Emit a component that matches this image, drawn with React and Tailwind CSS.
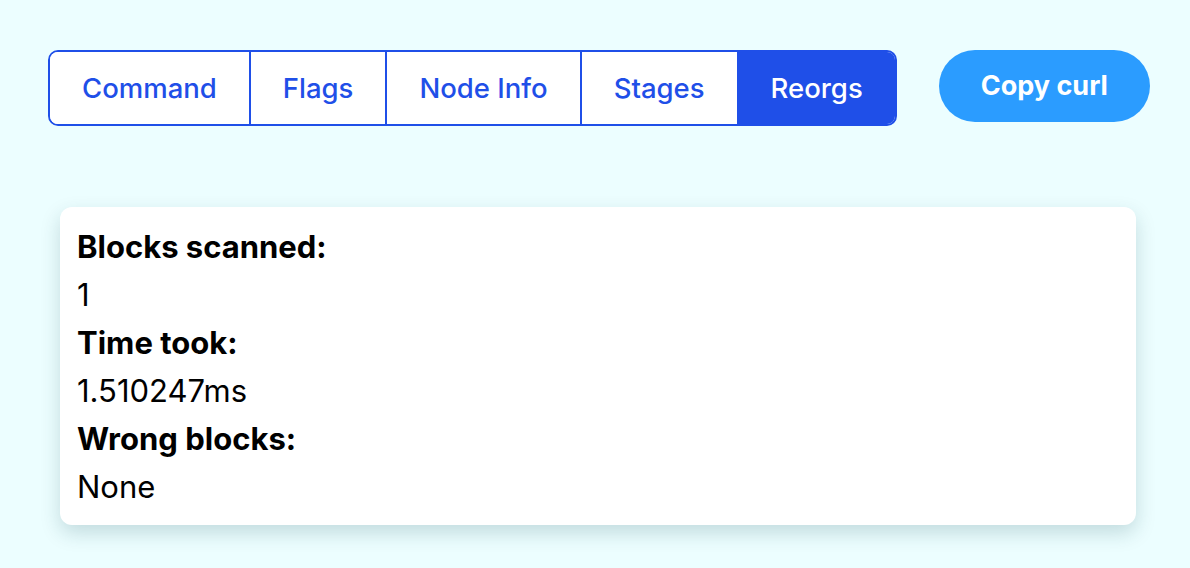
import React, { useState } from 'react';

const tabs = ['Command', 'Flags', 'Node Info', 'Stages', 'Reorgs'];

const rows = [
  { label: 'Blocks scanned:', value: '1' },
  { label: 'Time took:', value: '1.510247ms' },
  { label: 'Wrong blocks:', value: 'None' },
];

export default function App() {
  const [active, setActive] = useState('Reorgs');

  return (
    <div className="min-h-[568px] bg-[#ecfeff] pt-[50px] font-['Inter',sans-serif] text-black">
      {/* Tabs + action */}
      <div className="flex items-start pl-[48px]">
        <div className="flex h-[76px] overflow-hidden rounded-[10px] border-2 border-[#1f4fe8] bg-white">
          {tabs.map((tab, i) => (
            <button
              key={tab}
              onClick={() => setActive(tab)}
              className={
                (i > 0 ? 'border-l-2 border-[#1f4fe8] ' : '') +
                (active === tab
                  ? 'bg-[#1f4fe8] text-white '
                  : 'bg-white text-[#1f4fe8] ') +
                'px-[32px] pt-[2px] text-[27.5px] font-medium'
              }
            >
              {tab}
            </button>
          ))}
        </div>
        <button className="ml-[42px] h-[72px] rounded-full bg-[#2b9cff] px-[42px] text-[27px] font-bold text-white">
          Copy curl
        </button>
      </div>

      {/* Reorg results */}
      <div className="mt-[81px] pl-[60px] pr-[54px]">
        <div className="rounded-[12px] bg-white px-[17px] pt-[16px] pb-[14px] shadow-[0_8px_20px_rgba(0,60,70,0.18)]">
          {rows.map((row) => (
            <div key={row.label}>
              <div className="text-[31px] leading-[48px] font-bold">{row.label}</div>
              <div className="text-[31px] leading-[48px]">{row.value}</div>
            </div>
          ))}
        </div>
      </div>
    </div>
  );
}
